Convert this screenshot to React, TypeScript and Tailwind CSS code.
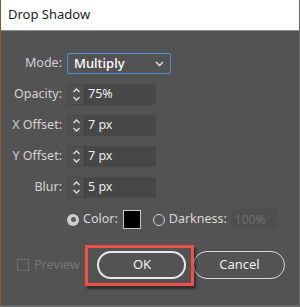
import React from "react";

const font = { fontFamily: '"Noto Sans", "Open Sans", sans-serif' };

function Spin({ value }: { value: string }) {
  return (
    <div className="flex h-[21px] w-[89px] border border-[#4a4a4a] bg-[#4c4c4c]">
      <div className="flex w-[17px] flex-col items-center justify-center border-r border-[#3f3f3f] bg-[#505050]">
        <svg width="9" height="15" viewBox="0 0 9 15" fill="none" stroke="#e0e0e0" strokeWidth="1.3">
          <path d="M1.5 5 L4.5 2 L7.5 5" />
          <path d="M1.5 10 L4.5 13 L7.5 10" />
        </svg>
      </div>
      <div className="flex flex-1 items-center bg-[#474747] pl-[3px] text-[12.5px] text-[#ececec]">{value}</div>
    </div>
  );
}

function Row({ label, children }: { label: string; children: React.ReactNode }) {
  return (
    <div className="flex h-[21px] items-center">
      <div className="w-[61px] text-right text-[12.5px] text-[#d2d2d2]">{label}</div>
      <div className="ml-[5px]">{children}</div>
    </div>
  );
}

export default function App() {
  return (
    <div
      className="flex h-[307px] w-[300px] flex-col overflow-hidden border-l border-r border-b-2 border-l-[#8a5a2e] border-r-[#6b6b6b] border-b-[#676767] bg-[#535353]"
      style={font}
    >
      <div className="flex h-[31px] shrink-0 items-center border-b border-[#8c8c8c] bg-white pl-[7px] text-[13px] text-[#1a1a1a]">
        Drop Shadow
      </div>
      <div className="mt-[22px] flex flex-col gap-[10px]">
        <Row label="Mode:">
          <div className="flex h-[21px] w-[104px] items-center justify-between rounded-[2px] border border-[#4f8fd8] bg-[#535353] pl-[6px] pr-[6px] text-[13px] font-medium text-white">
            <span>Multiply</span>
            <svg width="9" height="6" viewBox="0 0 9 6" fill="none" stroke="#e6e6e6" strokeWidth="1.3">
              <path d="M1 1 L4.5 4.5 L8 1" />
            </svg>
          </div>
        </Row>
        <Row label="Opacity:">
          <Spin value="75%" />
        </Row>
        <Row label="X Offset:">
          <Spin value="7 px" />
        </Row>
        <Row label="Y Offset:">
          <Spin value="7 px" />
        </Row>
        <Row label="Blur:">
          <Spin value="5 px" />
        </Row>
      </div>
      <div className="ml-[66px] mt-[11px] flex h-[21px] items-center">
        <div className="flex h-[12px] w-[12px] items-center justify-center rounded-full bg-[#cfcfcf]">
          <div className="h-[5px] w-[5px] rounded-full bg-[#5a5a5a]" />
        </div>
        <span className="ml-[4px] text-[12.5px] text-[#d8d8d8]">Color:</span>
        <div className="ml-[5px] flex h-[19px] w-[18px] items-center justify-center border border-[#c8c8c8] bg-black" />
        <div className="ml-[12px] h-[12px] w-[12px] rounded-full border border-[#cfcfcf]" />
        <span className="ml-[4px] text-[12.5px] text-[#d8d8d8]">Darkness:</span>
        <div className="ml-[4px] flex h-[21px] w-[47px] items-center bg-[#4f4f4f] pl-[4px] text-[12px] text-[#6e6e6e]">
          100%
        </div>
      </div>
      <div className="mt-[21px] flex h-[28px] items-center">
        <div className="ml-[16px] h-[12px] w-[12px] border border-[#6e6e6e]" />
        <span className="ml-[5px] text-[12.5px] text-[#757575]">Preview</span>
        <div className="relative ml-[18px] flex h-[28px] w-[89px] items-center justify-center rounded-full border-2 border-[#e8e8e8] text-[13px] text-[#f0f0f0]">
          OK
          <div className="pointer-events-none absolute left-[-14px] top-[-8px] h-[41px] w-[109px] border-[3px] border-[#ef5149] shadow-[2px_3px_2px_rgba(0,0,0,0.45)]" />
        </div>
        <div className="ml-[7px] flex h-[28px] w-[92px] items-center justify-center rounded-full border-[1.5px] border-[#d8d8d8] text-[13px] text-[#f0f0f0]">
          Cancel
        </div>
      </div>
    </div>
  );
}
